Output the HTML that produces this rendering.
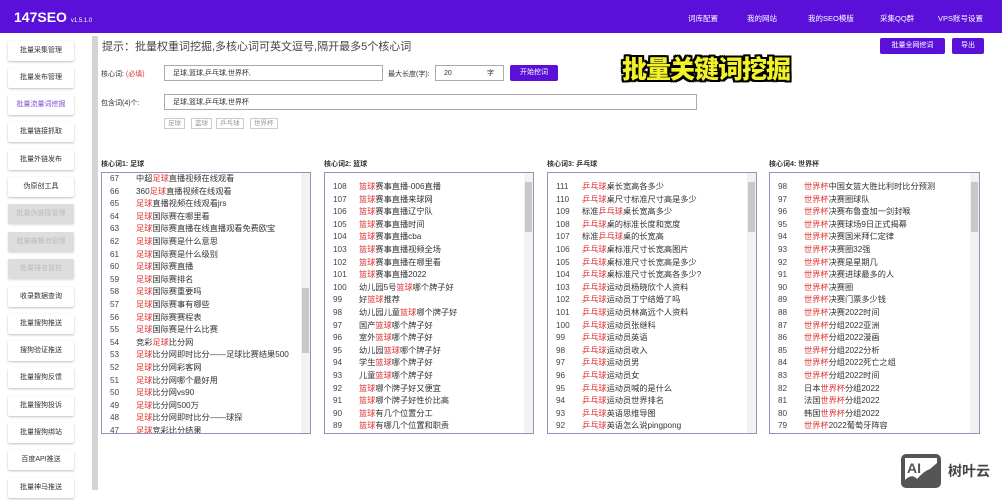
<!DOCTYPE html>
<html><head><meta charset="utf-8">
<style>
*{margin:0;padding:0;box-sizing:border-box}
body{width:1002px;height:500px;overflow:hidden;background:#fff;font-family:"Liberation Sans","Noto Sans CJK SC",sans-serif;color:#333;position:relative}
.hdr{position:absolute;left:0;top:0;width:1002px;height:33px;background:#5a10d8;color:#fff}
.logo{position:absolute;left:14px;top:9px;font-size:14px;font-weight:bold}
.logo small{font-size:6px;font-weight:normal}
.nav{position:absolute;top:13px;font-size:7.5px;color:#fff}
.sb{position:absolute;left:8px;width:66px;height:20px;background:#fff;box-shadow:0 1px 2px rgba(0,0,0,.25);border-radius:2px;font-size:7px;text-align:center;line-height:20px;color:#333}
.sb.dis{background:#ddd;color:#bbb;box-shadow:0 1px 2px rgba(0,0,0,.15)}
.sb.act{color:#7a4fd0}
.scr{position:absolute;left:92px;top:36px;width:6px;height:454px;background:#d4d4d4}
.abs{position:absolute}
.inp{position:absolute;border:1px solid #aaa;background:#fff;font-size:7px;padding-left:8px;line-height:15px;height:16px}
.btn{position:absolute;background:#5a10d8;color:#fff;font-size:7px;text-align:center;border-radius:2px}
.tag{position:absolute;top:118px;height:11px;border:1px solid #ccc;font-size:6.5px;color:#999;line-height:9px;padding:0 3px}
.lbl{position:absolute;top:159px;font-size:7px;font-weight:bold;color:#333}
.box{position:absolute;top:172px;height:262px;border:1px solid #9a8fb8;background:#fff;overflow:hidden}
.row{position:absolute;left:8px;font-size:8.2px;line-height:12.6px;white-space:nowrap;color:#333}
.row b{display:inline-block;width:26px;font-weight:normal;color:#444}
.row i{font-style:normal;color:#e03030}
.vs{position:absolute;right:0;top:0;width:9px;height:100%;background:#f2f2f2}
.th{position:absolute;right:1px;width:7px;background:#c8c8c8}
</style></head><body>
<div class="hdr">
<div class="logo">147SEO <small>v1.5.1.0</small></div>
<div class="nav" style="left:688px">词库配置</div>
<div class="nav" style="left:747px">我的网站</div>
<div class="nav" style="left:808px">我的SEO模版</div>
<div class="nav" style="left:880px">采集QQ群</div>
<div class="nav" style="left:938px">VPS账号设置</div>
</div>
<div class="sb" style="top:41px">批量采集管理</div>
<div class="sb" style="top:68px">批量发布管理</div>
<div class="sb act" style="top:95px">批量流量词挖掘</div>
<div class="sb" style="top:122px">批量链接抓取</div>
<div class="sb" style="top:150px">批量外链发布</div>
<div class="sb" style="top:177px">伪原创工具</div>
<div class="sb dis" style="top:204px">批量伪链接管理</div>
<div class="sb dis" style="top:232px">批量蜘蛛池管理</div>
<div class="sb dis" style="top:259px">批量排名监控</div>
<div class="sb" style="top:287px">收录数据查询</div>
<div class="sb" style="top:314px">批量搜狗推送</div>
<div class="sb" style="top:341px">搜狗验证推送</div>
<div class="sb" style="top:368px">批量搜狗反馈</div>
<div class="sb" style="top:396px">批量搜狗投诉</div>
<div class="sb" style="top:423px">批量搜狗绑站</div>
<div class="sb" style="top:450px">百度API推送</div>
<div class="sb" style="top:478px">批量神马推送</div>
<div class="scr"></div>

<div class="abs" style="left:102px;top:38px;font-size:11px;color:#444">提示：批量权重词挖掘,多核心词可英文逗号,隔开最多5个核心词</div>
<div class="btn" style="left:880px;top:38px;width:65px;height:16px;line-height:16px">批量全网挖词</div>
<div class="btn" style="left:952px;top:38px;width:32px;height:16px;line-height:16px">导出</div>
<div class="abs" style="left:101px;top:69px;font-size:7px">核心词: <span style="color:#d33">(必填)</span></div>
<div class="inp" style="left:164px;top:65px;width:219px">足球,篮球,乒乓球,世界杯,</div>
<div class="abs" style="left:388px;top:69px;font-size:7px">最大长度(字):</div>
<div class="inp" style="left:435px;top:65px;width:69px">20<span style="position:absolute;right:9px">字</span></div>
<div class="btn" style="left:510px;top:65px;width:48px;height:16px;line-height:16px">开始挖词</div>
<div class="abs" style="left:622px;top:50px;font-size:25px;font-weight:900;color:#f2f22a;letter-spacing:-1px;text-shadow:2px 0 #000,-2px 0 #000,0 2px #000,0 -2px #000,2px 2px #000,-2px -2px #000,2px -2px #000,-2px 2px #000">批量关键词挖掘</div>
<div class="abs" style="left:101px;top:98px;font-size:7px">包含词(4)个:</div>
<div class="inp" style="left:164px;top:94px;width:533px">足球,篮球,乒乓球,世界杯</div>
<div class="tag" style="left:164px">足球</div>
<div class="tag" style="left:191px">篮球</div>
<div class="tag" style="left:216px">乒乓球</div>
<div class="tag" style="left:250px">世界杯</div>

<div class="lbl" style="left:101px">核心词1: 足球</div>
<div class="lbl" style="left:324px">核心词2: 篮球</div>
<div class="lbl" style="left:547px">核心词3: 乒乓球</div>
<div class="lbl" style="left:769px">核心词4: 世界杯</div>

<div class="box" id="b1" style="left:101px;width:210px"></div>
<div class="box" id="b2" style="left:324px;width:210px"></div>
<div class="box" id="b3" style="left:547px;width:210px"></div>
<div class="box" id="b4" style="left:769px;width:211px"></div>

<svg class="abs" style="left:900px;top:453px" width="42" height="36" viewBox="0 0 42 36"><rect x="1" y="1" width="40" height="34" rx="5" fill="#555"/><rect x="5" y="5" width="32" height="26" fill="#fff"/><text x="7" y="20" font-family="Liberation Sans" font-weight="bold" font-size="14" fill="#555">AI</text><path d="M5 31 L5 27 Q12 20 17 26 Q24 18 30 16 L37 10 L37 31 Z" fill="#555"/></svg>
<div class="abs" style="left:948px;top:461px;font-size:14px;color:#444;font-weight:bold">树叶云</div>

<script>
function fill(id,top,data,kw,thumbTop,thumbH){
 var b=document.getElementById(id),h='';
 data.forEach(function(d,i){
  var t=d[1].replace(kw,'<i>'+kw+'</i>');
  h+='<div class="row" style="top:'+(top+i*12.6)+'px"><b>'+d[0]+'</b>'+t+'</div>';
 });
 h+='<div class="vs"><div class="th" style="top:'+thumbTop+'px;height:'+thumbH+'px"></div></div>';
 b.innerHTML=h;
}
fill('b1',0,[[67,'中超足球直播视频在线观看'],[66,'360足球直播视频在线观看'],[65,'足球直播视频在线观看jrs'],[64,'足球国际赛在哪里看'],[63,'足球国际赛直播在线直播观看免费欧宝'],[62,'足球国际赛是什么意思'],[61,'足球国际赛是什么级别'],[60,'足球国际赛直播'],[59,'足球国际赛排名'],[58,'足球国际赛重要吗'],[57,'足球国际赛事有哪些'],[56,'足球国际赛赛程表'],[55,'足球国际赛是什么比赛'],[54,'竞彩足球比分网'],[53,'足球比分网即时比分——足球比赛结果500'],[52,'足球比分网彩客网'],[51,'足球比分网哪个最好用'],[50,'足球比分网vs90'],[49,'足球比分网500万'],[48,'足球比分网即时比分——球探'],[47,'足球竞彩比分结果']],'足球',115,65);
fill('b2',8,[[108,'篮球赛事直播-006直播'],[107,'篮球赛事直播来球网'],[106,'篮球赛事直播辽宁队'],[105,'篮球赛事直播时间'],[104,'篮球赛事直播cba'],[103,'篮球赛事直播视频全场'],[102,'篮球赛事直播在哪里看'],[101,'篮球赛事直播2022'],[100,'幼儿园5号篮球哪个牌子好'],[99,'好篮球推荐'],[98,'幼儿园儿童篮球哪个牌子好'],[97,'国产篮球哪个牌子好'],[96,'室外篮球哪个牌子好'],[95,'幼儿园篮球哪个牌子好'],[94,'学生篮球哪个牌子好'],[93,'儿童篮球哪个牌子好'],[92,'篮球哪个牌子好又便宜'],[91,'篮球哪个牌子好性价比高'],[90,'篮球有几个位置分工'],[89,'篮球有哪几个位置和职责']],'篮球',9,50);
fill('b3',8,[[111,'乒乓球桌长宽高各多少'],[110,'乒乓球桌尺寸标准尺寸高是多少'],[109,'标准乒乓球桌长宽高多少'],[108,'乒乓球桌的标准长度和宽度'],[107,'标准乒乓球桌的长宽高'],[106,'乒乓球桌标准尺寸长宽高图片'],[105,'乒乓球桌标准尺寸长宽高是多少'],[104,'乒乓球桌标准尺寸长宽高各多少?'],[103,'乒乓球运动员杨晓欣个人资料'],[102,'乒乓球运动员丁宁结婚了吗'],[101,'乒乓球运动员林高远个人资料'],[100,'乒乓球运动员张继科'],[99,'乒乓球运动员英语'],[98,'乒乓球运动员收入'],[97,'乒乓球运动员男'],[96,'乒乓球运动员女'],[95,'乒乓球运动员喊的是什么'],[94,'乒乓球运动员世界排名'],[93,'乒乓球英语思维导图'],[92,'乒乓球英语怎么说pingpong']],'乒乓球',9,50);
fill('b4',8,[[98,'世界杯中国女篮大胜比利时比分预测'],[97,'世界杯决赛圈球队'],[96,'世界杯决赛布鲁查加一剑封喉'],[95,'世界杯决赛球场9日正式揭幕'],[94,'世界杯决赛国米拜仁定律'],[93,'世界杯决赛圈32强'],[92,'世界杯决赛是星期几'],[91,'世界杯决赛进球最多的人'],[90,'世界杯决赛圈'],[89,'世界杯决赛门票多少钱'],[88,'世界杯决赛2022时间'],[87,'世界杯分组2022亚洲'],[86,'世界杯分组2022漫画'],[85,'世界杯分组2022分析'],[84,'世界杯分组2022死亡之组'],[83,'世界杯分组2022时间'],[82,'日本世界杯分组2022'],[81,'法国世界杯分组2022'],[80,'韩国世界杯分组2022'],[79,'世界杯2022葡萄牙阵容']],'世界杯',9,50);
</script>
</body></html>
